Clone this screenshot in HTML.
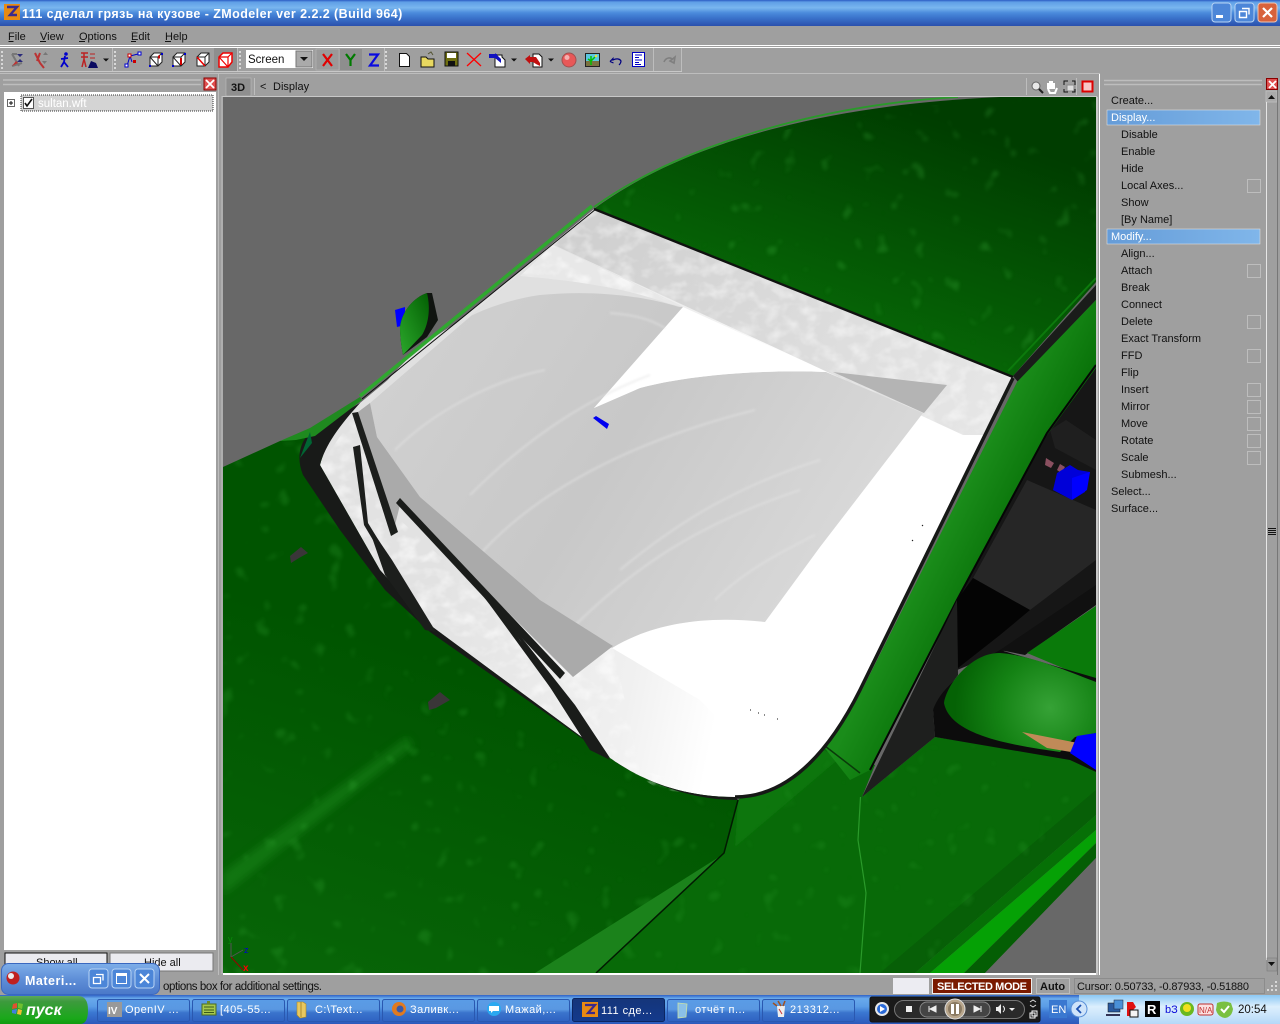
<!DOCTYPE html>
<html><head><meta charset="utf-8"><title>ZModeler</title>
<style>
html,body{margin:0;padding:0;background:#9f9f9f;overflow:hidden}
svg{display:block;position:absolute;left:0;top:0}
text{font-family:"Liberation Sans","Noto Sans CJK SC",sans-serif;font-size:11px;fill:#111}
.w{fill:#fff}
.b{font-weight:bold}
.t{fill:#fff;font-size:11px;letter-spacing:.45px}
</style></head><body>
<svg width="1280" height="1024" viewBox="0 0 1280 1024" xmlns="http://www.w3.org/2000/svg">
<defs>
<linearGradient id="tb" x1="0" y1="0" x2="0" y2="1"><stop offset="0" stop-color="#2c5cc4"/><stop offset=".08" stop-color="#5f9fe6"/><stop offset=".3" stop-color="#79b6ef"/><stop offset=".5" stop-color="#4a8adb"/><stop offset=".7" stop-color="#3a72ca"/><stop offset="1" stop-color="#2a50ac"/></linearGradient>
<linearGradient id="task" x1="0" y1="0" x2="0" y2="1"><stop offset="0" stop-color="#2f62c6"/><stop offset=".12" stop-color="#69aaec"/><stop offset=".4" stop-color="#5a9ce6"/><stop offset=".6" stop-color="#3b78d2"/><stop offset="1" stop-color="#2c59bb"/></linearGradient>
<linearGradient id="btn" x1="0" y1="0" x2="0" y2="1"><stop offset="0" stop-color="#5a9ce6"/><stop offset=".45" stop-color="#5a98e2"/><stop offset=".6" stop-color="#3a74cc"/><stop offset="1" stop-color="#2f62c2"/></linearGradient>
<linearGradient id="tray" x1="0" y1="0" x2="0" y2="1"><stop offset="0" stop-color="#8cc8f4"/><stop offset=".4" stop-color="#dceffd"/><stop offset=".65" stop-color="#cde6fb"/><stop offset="1" stop-color="#b4d8f7"/></linearGradient>
<linearGradient id="act" x1="0" y1="0" x2="0" y2="1"><stop offset="0" stop-color="#15357a"/><stop offset="1" stop-color="#133a8c"/></linearGradient>
<linearGradient id="start" x1="0" y1="0" x2="0" y2="1"><stop offset="0" stop-color="#5ba85b"/><stop offset=".2" stop-color="#3d9a3d"/><stop offset=".8" stop-color="#1aa81a"/><stop offset="1" stop-color="#109a10"/></linearGradient>
<linearGradient id="mat" x1="0" y1="0" x2="0" y2="1"><stop offset="0" stop-color="#7eaee8"/><stop offset=".5" stop-color="#5f8fd8"/><stop offset="1" stop-color="#4a78c8"/></linearGradient>
<linearGradient id="hl" x1="0" y1="0" x2="1" y2="0"><stop offset="0" stop-color="#659cd8"/><stop offset="1" stop-color="#80b6ea"/></linearGradient>
<linearGradient id="roof" gradientUnits="userSpaceOnUse" x1="880" y1="100" x2="800" y2="340"><stop offset="0" stop-color="#003d00"/><stop offset="1" stop-color="#076a07"/></linearGradient>
<linearGradient id="hood" gradientUnits="userSpaceOnUse" x1="400" y1="640" x2="300" y2="960"><stop offset="0" stop-color="#005400"/><stop offset="1" stop-color="#076407"/></linearGradient>
<linearGradient id="pil" gradientUnits="userSpaceOnUse" x1="925" y1="570" x2="985" y2="600"><stop offset="0" stop-color="#1a8c1a"/><stop offset="1" stop-color="#077007"/></linearGradient>
<radialGradient id="mir" gradientUnits="userSpaceOnUse" cx="1050" cy="708" r="95"><stop offset="0" stop-color="#36a236"/><stop offset=".55" stop-color="#148214"/><stop offset="1" stop-color="#056205"/></radialGradient>
<linearGradient id="mirl" x1="0" y1="1" x2="1" y2="0"><stop offset="0" stop-color="#2ba82b"/><stop offset="1" stop-color="#035f03"/></linearGradient>
<linearGradient id="glass" gradientUnits="userSpaceOnUse" x1="400" y1="350" x2="800" y2="600"><stop offset="0" stop-color="#d0d0d0"/><stop offset=".5" stop-color="#c8c8c8"/><stop offset="1" stop-color="#d8d8d8"/></linearGradient>
<linearGradient id="ws" gradientUnits="userSpaceOnUse" x1="420" y1="640" x2="720" y2="700"><stop offset="0" stop-color="#e2e2e2"/><stop offset=".7" stop-color="#f0f0f0"/><stop offset="1" stop-color="#fff"/></linearGradient>
<linearGradient id="fr" gradientUnits="userSpaceOnUse" x1="600" y1="230" x2="1000" y2="390"><stop offset="0" stop-color="#d0d0d0"/><stop offset="1" stop-color="#e6e6e6"/></linearGradient>
<filter id="mot" x="0" y="0" width="100%" height="100%"><feTurbulence type="fractalNoise" baseFrequency=".06 .08" numOctaves="3" seed="4"/><feColorMatrix values="0 0 0 0 1  0 0 0 0 1  0 0 0 0 1  2.6 0 0 0 -1.1"/><feGaussianBlur stdDeviation=".6"/></filter>
<filter id="spk" x="0" y="0" width="100%" height="100%"><feTurbulence type="fractalNoise" baseFrequency=".055" numOctaves="2" seed="9"/><feColorMatrix values="0 0 0 0 .1  0 0 0 0 .72  0 0 0 0 .1  7 0 0 0 -4.6"/><feGaussianBlur stdDeviation="1.500"/></filter>
<filter id="bl"><feGaussianBlur stdDeviation="4"/></filter>
<filter id="bl1"><feGaussianBlur stdDeviation="1"/></filter>
<clipPath id="vp"><rect x="223" y="97" width="873" height="876"/></clipPath>
<clipPath id="frit"><path d="M594 209L1013 378L985 435L963 435L554 245Z"/></clipPath>
<clipPath id="low"><path d="M320 465L355 415L400 520L573 677L613 646L640 770L735 797L660 790L610 758L430 625L380 570Z"/></clipPath>
<clipPath id="top"><path d="M553 245L683 307L670 304C630 290 590 282 520 276Z"/></clipPath>
<clipPath id="hoodc"><path d="M223 467L280 441L310 432L330 470L390 590L430 630L620 763L738 800L724 853L596 973H223Z"/></clipPath>
<clipPath id="roofc"><path d="M597 209C680 150 820 110 1000 100H1096V282L1012 370Z"/></clipPath>
<clipPath id="fendc"><path d="M738 800L830 745L862 797L935 737L1096 772V815L915 973H596L724 853Z"/></clipPath>
<g id="cube"><path d="M3 6L7 2H15V11L11 15H3Z" fill="#fff" stroke="#222"/><path d="M3 6H11V15M11 6L15 2M3 6L11 15" fill="none" stroke="#222"/></g>
</defs>

<!-- window chrome -->
<rect width="1280" height="1024" fill="#9f9f9f"/>
<rect width="1280" height="26" fill="url(#tb)"/>
<rect x="4" y="4" width="16" height="16" fill="#e88a12"/><path d="M7 7H17L10 15H17" fill="none" stroke="#3a2a8c" stroke-width="2.400"/>
<text x="22" y="18" class="w b" style="font-size:12.500px;letter-spacing:.7px" textLength="381" lengthAdjust="spacing">111 сделал грязь на кузове - ZModeler ver 2.2.2 (Build 964)</text>
<rect x="1212" y="3" width="19" height="19" rx="3" fill="#4c86d8" stroke="#b8d4f4"/><rect x="1216" y="15" width="7" height="3" fill="#fff"/>
<rect x="1235" y="3" width="19" height="19" rx="3" fill="#4c86d8" stroke="#b8d4f4"/><path d="M1242 8.500h7v6M1239.500 11.500h7v6h-7z" fill="none" stroke="#fff" stroke-width="1.400"/>
<rect x="1258" y="3" width="19" height="19" rx="3" fill="#d8623c" stroke="#f0c4b0"/><path d="M1263 8l9 9M1272 8l-9 9" stroke="#fff" stroke-width="2.200"/>

<text x="8" y="40">File</text><text x="40" y="40">View</text><text x="79" y="40">Options</text><text x="131" y="40">Edit</text><text x="165" y="40">Help</text>
<path d="M8.500 41.500h5M40 41.500h6M79 41.500h6M131 41.500h5M165 41.500h6" stroke="#111"/>
<rect y="45" width="1280" height="1" fill="#fff"/><rect y="47" width="1280" height="1" fill="#fff"/>
<rect y="71" width="682" height="1" fill="#c8c8c8"/>
<path d="M2 51v2M2 55v2M2 59v2M2 63v2M2 67v2M115 51v2M115 55v2M115 59v2M115 63v2M115 67v2M240 51v2M240 55v2M240 59v2M240 63v2M240 67v2M386 51v2M386 55v2M386 59v2M386 63v2M386 67v2" stroke="#d8d8d8" stroke-width="2"/>
<path d="M112.500 48V71M237.500 48V71M384.500 48V71M653.500 48V71M681.500 48V71" stroke="#bdbdbd"/>

<!-- toolbar icons -->
<path d="M12 54l7 12M12 66l10-3M12 54h5" stroke="#777" stroke-width="2" fill="none"/><path d="M17 54l6 0-3 3zM17 62l6 0-3-3z" fill="#2a2a7a"/><path d="M12 66l6-3-2-2z" fill="#b33"/>
<path d="M35 53l5 10 4 5M40 53l-3 8" stroke="#b33" stroke-width="2" fill="none"/><path d="M43 55l5 0-2.500-3zM42 61h5l-2.500 3z" fill="#777"/>
<circle cx="66" cy="54" r="1.800" fill="#00c"/><path d="M65 56l-1 6-3 5M64 62l4 5M61 59l7-1" stroke="#00c" stroke-width="1.800" fill="none"/>
<path d="M81 53h7M81 57h7M84 53v6l2 8M84 59l-2 8" stroke="#b22" stroke-width="1.500" fill="none"/><path d="M88 68l3-7 5 2 2 5z" fill="#0a0a60"/><path d="M90 54h5M90 58h5" stroke="#b22"/>
<path d="M103 58.500h6l-3 3z" fill="#111"/>
<path d="M127 66l3-10 8-2M132 62l-2-6" stroke="#0000c8" fill="none"/><rect x="128" y="54" width="3" height="3" fill="#fff" stroke="#c00"/><rect x="138" y="52" width="3" height="3" fill="#fff" stroke="#00c"/><rect x="125" y="64" width="3" height="3" fill="#fff" stroke="#00c"/><rect x="133" y="60" width="3" height="3" fill="#c00"/>
<use href="#cube" x="147" y="51"/><path d="M158 57l2 0" stroke="#c00" stroke-width="3"/><rect x="149" y="65" width="2" height="2" fill="#00c"/><rect x="161" y="53" width="2" height="2" fill="#00c"/>
<use href="#cube" x="170" y="51"/><path d="M181 58v7" stroke="#c00" stroke-width="2"/><rect x="172" y="65" width="2" height="2" fill="#00c"/><rect x="184" y="53" width="2" height="2" fill="#00c"/>
<use href="#cube" x="194" y="51"/><path d="M197 57l8 9" stroke="#e00" stroke-width="1.500"/>
<rect x="214" y="48" width="23" height="23" fill="#8e8e8e"/><path d="M219 57L223 53H232V62L228 67H219Z" fill="#fff" stroke="#e00" stroke-width="1.500"/><path d="M219 57H228V67M228 57L232 53M219 57L228 67" fill="none" stroke="#e00" stroke-width="1.200"/>
<rect x="246" y="50" width="67" height="18" fill="#fff"/><rect x="296" y="51" width="16" height="16" fill="#aaa" stroke="#777"/><path d="M300 57h8l-4 4z" fill="#111"/>
<text x="248" y="63" style="font-size:11.500px">Screen</text>
<rect x="316" y="49" width="23" height="21" fill="#9a9a9a" stroke="#bdbdbd" stroke-width=".5"/>
<path d="M323 54l9 12M332 54l-9 12" stroke="#e00000" stroke-width="2.200"/>
<rect x="340" y="49" width="22" height="21" fill="#8e8e8e"/>
<path d="M346 54l4.500 6 4.500-6M350.500 60v6" stroke="#007a00" stroke-width="2.200" fill="none"/>
<path d="M369 54.500h9l-8 11h9" stroke="#0a0ae0" stroke-width="2.200" fill="none"/>
<path d="M399.500 53.500h7l3 3v10h-10z" fill="#fff" stroke="#111"/>
<path d="M421 57h5l2 2h6v8h-13z" fill="#e8d860" stroke="#111"/><path d="M428 54l3-2 2 3" stroke="#553" fill="none"/>
<rect x="445" y="52" width="13" height="14" fill="#6e6e10" stroke="#111"/><rect x="447" y="53" width="9" height="5" fill="#fff"/><rect x="448" y="61" width="7" height="5" fill="#111"/>
<path d="M467 53l14 13M481 53l-14 13" stroke="#f00" stroke-width="1.300"/>
<path d="M495 55h7v2l3 3v7h-10z" fill="#fff" stroke="#111"/><path d="M489 54h6v-1l6 6v4l-6-5v-1h-6z" fill="#1010c0"/><rect x="489" y="54" width="8" height="4" fill="#1010c0"/>
<path d="M511 58.500h6l-3 3z" fill="#111"/><path d="M548 58.500h6l-3 3z" fill="#111"/>
<path d="M533 54h6l3 3v10h-9z" fill="#fff" stroke="#111"/><path d="M525 59l5-4v2h6l4 6v3l-4-2-3-2h-3v2z" fill="#c01010"/>
<circle cx="569" cy="60" r="7" fill="#e85858"/><circle cx="567" cy="57.500" r="2.500" fill="#f4b0b0"/><circle cx="569" cy="60" r="7" fill="none" stroke="#a05050"/>
<rect x="585.500" y="53.500" width="14" height="13" fill="#5ac8e0" stroke="#222"/><rect x="586" y="61" width="13" height="5" fill="#7a7240"/><path d="M591 65v-9M588 59l3 2 4-4" stroke="#00c000" stroke-width="1.500" fill="none"/><circle cx="596" cy="56" r="1.300" fill="#e8e040"/>
<path d="M610 61.500l3-3v1.500c4-2 7-1 8 1 0 2-1 3-2 4M610 61.500l3.500 1.500" fill="none" stroke="#000080" stroke-width="1.200"/>
<rect x="632.500" y="52.500" width="12" height="14" fill="#fff" stroke="#0000c0"/><path d="M635 55h7M635 57.500h4M635 60h7M635 62.500h4M635 64.500h6" stroke="#0000c8"/>
<path d="M664 62c2-5 7-5 9-2M675 57l-1 6-4-2z" fill="none" stroke="#7f7f7f" stroke-width="1.600"/>

<!-- left panel -->
<rect y="73" width="1100" height="1" fill="#bdbdbd"/>
<path d="M3 80H201M3 84.500H201" stroke="#bdbdbd" stroke-width="1.400"/>
<rect x="204" y="78" width="12" height="12" fill="#e05050" stroke="#800"/><path d="M206 80l8 8M214 80l-8 8" stroke="#fff" stroke-width="1.800"/>
<rect x="4" y="92" width="212" height="858" fill="#fff"/>
<path d="M218.500 73V975" stroke="#bdbdbd"/>
<rect x="7.500" y="99.500" width="7" height="7" fill="#fff" stroke="#666"/><path d="M9 103h4M11 101v4" stroke="#111"/>
<rect x="21" y="95" width="192" height="16" fill="#d4d4d4" stroke="#333" stroke-dasharray="1 1"/>
<rect x="23.500" y="97.500" width="10" height="11" fill="#fff" stroke="#555"/><path d="M25 103l2 3 5-7" fill="none" stroke="#111" stroke-width="1.600"/>
<text x="38" y="107" style="fill:#fff;font-size:11.500px">sultan.wft</text>
<rect x="5" y="953" width="102" height="19" fill="#ebebf0" stroke="#111"/><text x="36" y="966">Show all</text>
<rect x="110" y="953" width="103" height="18" fill="#ebebf0" stroke="#777"/><text x="144" y="966">Hide all</text>

<!-- viewport header -->
<rect x="226" y="78" width="25" height="18" fill="#8f8f8f" stroke="#bdbdbd" stroke-width=".6"/>
<text x="231" y="91" class="b">3D</text>
<text x="260" y="90">&lt;</text><text x="273" y="90">Display</text>
<path d="M254.500 78V95M1026.500 78V95M1076.500 78V95" stroke="#bdbdbd"/>
<circle cx="1036" cy="86" r="4" fill="#e8e8e8" stroke="#666"/><path d="M1039 89l4 4" stroke="#222" stroke-width="2"/>
<path d="M1048 89l0-6m2 6v-8m2 8v-8m2 8v-6m-6 6l2 4h5l2-5" stroke="#fff" stroke-width="2" fill="none"/>
<path d="M1064 85v-4h4M1072 81h3v4M1075 89v3h-3M1068 92h-4v-3" stroke="#111" fill="none"/><rect x="1067" y="85" width="7" height="6" fill="#ddd" stroke="#888"/>
<rect x="1082.500" y="81.500" width="10" height="10" fill="#f8c8c8" stroke="#d00" stroke-width="2"/>
<rect x="222" y="96" width="875" height="1" fill="#c8c8c8"/>

<!-- viewport -->
<rect x="223" y="97" width="873" height="876" fill="#686868"/>
<g clip-path="url(#vp)">
<!-- hood -->
<path d="M223 467L280 441L310 432L330 470L390 590L430 630L620 763L738 800L724 853L596 973H223Z" fill="url(#hood)"/>
<g clip-path="url(#hoodc)"><path d="M223 873L407 737L414 745L223 895Z" fill="#1d8a1d" opacity=".5" filter="url(#bl)"/></g>
<rect x="223" y="440" width="515" height="535" filter="url(#spk)" opacity=".14" clip-path="url(#hoodc)"/>
<!-- fender -->
<path d="M738 800L815 740L875 765L862 797L935 737L1070 758L1096 772V815L915 973H596L724 853Z" fill="#086a08"/>
<g clip-path="url(#fendc)">
<path d="M738 800L818 748L841 757L735 847Z" fill="#0c760c" filter="url(#bl1)"/>
<path d="M880 973L1096 790V815L915 973Z" fill="#075f07"/>
<rect x="596" y="740" width="500" height="235" filter="url(#spk)" opacity=".1"/>
</g>
<path d="M535 973L719 857L724 853L596 973Z" fill="#1b821b"/>
<path d="M1096 815V830L930 973H915Z" fill="#067006"/>
<path d="M1096 830V843L964 973H930Z" fill="#05a105"/>
<path d="M1096 843V858L985 973H964Z" fill="#045e04"/>
<path d="M1096 858L985 973H1096Z" fill="#686868"/>
<path d="M738 800L724 853L596 973" fill="none" stroke="#021a02" stroke-width="1.500"/>
<path d="M860.500 797L858 840L866 893L860 973" fill="none" stroke="#2a9a2a" stroke-width="1.200"/>
<!-- roof -->
<path d="M594 209C680 145 820 105 1000 97H1096V282L1013 376Z" fill="url(#roof)"/>
<rect x="600" y="100" width="496" height="270" filter="url(#spk)" opacity=".18" clip-path="url(#roofc)"/>
<path d="M594 207C680 145 820 105 958 97" fill="none" stroke="#2a9a2a" stroke-width="1.800"/>
<path d="M1008 371L1096 278" stroke="#0c7a0c" stroke-width="2"/>
<!-- interior -->
<path d="M1096 355L1030 430L945 600V675L1030 640L1096 600Z" fill="#161616"/>
<path d="M1027 480L1096 510V560L1030 610L973 578Z" fill="#262626"/>
<path d="M957 600L973 578L1030 610L1000 635L958 668Z" fill="#040404"/>
<path d="M1050 430L1066 420L1096 440V470L1055 448Z" fill="#1f1f1f"/>
<path d="M1000 650L1096 585V605L1025 655Z" fill="#101010"/>
<path d="M1027 653L1096 606V682Z" fill="#0a7a0a"/>
<path d="M1046 458l8 5-3 5-6-3z" fill="#8a5060"/><path d="M1060 464l5 3-4 6-4-3z" fill="#8a5060"/>
<path d="M1057 473L1070 465L1078 470L1090 472L1085 492L1072 500L1053 490Z" fill="#0000d8"/><path d="M1072 478L1090 472L1087 490L1072 500Z" fill="#0000ff"/>
<!-- a pillar -->
<path d="M1013 376L1096 285V300L1018 382Z" fill="#1a1c1a"/>
<path d="M1017 382L1096 300V368L1047 435L957 600L870 770L850 780L820 742L862 690Z" fill="url(#pil)"/>
<path d="M1096 365L1047 433L957 600L870 770" fill="none" stroke="#050505" stroke-width="2"/>
<path d="M825 746L860 773" stroke="#0a3a0a" stroke-width="1.500"/>
<!-- mirror base -->
<path d="M957 600L862 797L935 737L933 710L958 675Z" fill="#1e1f1e"/>
<path d="M933 710C940 690 960 672 1000 650L1096 678V772L1070 760L935 737Z" fill="#0c0c0c"/>
<path d="M944 703C948 680 975 652 1000 653C1030 655 1070 672 1096 682V733L1075 737L1060 752C1010 745 950 735 944 703Z" fill="url(#mir)"/>
<path d="M1022 732L1078 743L1077 753L1047 748Z" fill="#c08a58"/>
<path d="M1077 736L1096 733V770L1070 753Z" fill="#0000ff"/>
<!-- windshield -->
<path d="M594 209L1013 378L860 690C830 750 790 797 735 797C670 797 630 772 610 758L430 625L380 570L320 465C325 445 340 425 360 403Z" fill="url(#ws)"/>
<rect x="315" y="405" width="440" height="400" filter="url(#mot)" opacity=".55" clip-path="url(#low)"/>
<path d="M923 413L963 435L1013 378L860 690C840 730 815 770 780 785L700 700L612 648C650 625 700 615 765 622Z" fill="#fff"/>
<path d="M594 209L1013 378L985 435L963 435L554 245Z" fill="url(#fr)"/>
<rect x="540" y="205" width="480" height="235" filter="url(#mot)" opacity=".45" clip-path="url(#frit)"/>
<!-- inner glass -->
<path d="M370 403L553 245L683 307L594 408L640 388C700 372 780 370 826 372L923 413L820 547L765 622C700 615 650 625 612 648L540 600L420 497L377 437Z" fill="url(#glass)"/>
<path d="M370 403L553 245L683 307L679 307C640 295 590 290 540 295C470 305 410 345 370 403Z" fill="#e0e0e0"/>
<path d="M553 245L683 307L670 304C630 290 590 282 520 276Z" fill="#e8e8e8"/>
<rect x="515" y="240" width="175" height="70" filter="url(#mot)" opacity=".6" clip-path="url(#top)"/>
<path d="M833 372L947 385L924 413Z" fill="#b4b4b4"/>
<path d="M683 307L826 372C780 370 700 372 640 388L594 408Z" fill="#fff"/>
<path d="M610 313c25 2 40 6 55 15M395 450c40-40 100-70 150-80M470 495c40-40 100-90 180-120M475 560c60-70 160-120 280-150M560 640c60-60 120-110 240-150M620 570c60-50 120-85 200-110M715 600c30-30 70-50 100-65" fill="none" stroke="#e4e4e4" stroke-width="2" opacity=".55" filter="url(#bl1)"/>
<!-- shadow band -->
<path d="M358 412L370 403L377 437L420 497L540 600L613 646L573 677L400 505L395 525L372 455Z" fill="#aaaaaa"/>
<!-- black trim -->
<path d="M594 209L1013 377" stroke="#101210" stroke-width="2.400"/>
<path d="M1013 378L860 690C830 750 790 797 735 797" fill="none" stroke="#161816" stroke-width="3.500"/>
<path d="M310 432C298 445 297 460 303 475L340 530L385 590L430 632L620 765C670 795 710 800 738 800L735 797C670 797 630 772 610 758L430 625L380 570L320 465C325 445 340 425 360 403Z" fill="#181a18"/>
<path d="M280 441L310 428L360 397L362 400L315 436L296 440Z" fill="#1f8a1f"/>
<path d="M360 396L592 206" stroke="#2fa82f" stroke-width="3.500"/>
<path d="M362 399L596 209" stroke="#0c0c0c" stroke-width="1"/>
<path d="M310 432L312 443L300 458Z" fill="#063"/>
<!-- wipers -->
<path d="M352 413L358 412L398 532L391 536Z" fill="#1c1e1c"/>
<path d="M353 447L360 445L368 523L420 608L416 612L364 525Z" fill="#1c1e1c"/>
<path d="M367 523L385 575L425 630L436 632L392 560Z" fill="#1c1e1c"/>
<path d="M396 503L400 498L565 673L560 679Z" fill="#1a1c1a"/>
<path d="M453 557L490 600L610 760L590 750L563 705L490 605Z" fill="#1a1c1a"/>
<path d="M490 605L520 640L590 750L610 758L575 705L500 610Z" fill="#1a1c1a"/>
<!-- left mirror -->
<path d="M395 310l10-3 0 18-8 2z" fill="#0000ff"/>
<path d="M400 327C402 310 415 297 427 293H432L438 320L427 337L403 355C401 345 400 335 400 327Z" fill="#101410"/>
<path d="M400 327C402 310 415 297 427 293C431 310 428 325 422 335L403 355C401 345 400 335 400 327Z" fill="url(#mirl)"/>
<path d="M593 418l3-2 13 8-2 5z" fill="#0000f0"/>
<path d="M290 556l11-9 7 6-9 5-8 5z" fill="#3a3638"/><path d="M428 702l12-10 10 8-14 8-7 2z" fill="#3a3638"/>
<path d="M231 957l12-7M231 957v-14" fill="none" stroke="#555"/><path d="M231 957l12 13" stroke="#900"/>
<text x="228" y="942" style="font-size:9px;fill:#0a8a0a">y</text><text x="244" y="953" style="font-size:9px;fill:#0000d0">z</text><text x="243" y="971" class="b" style="font-size:10px;fill:#f00">x</text>
<path d="M750 710l1 0M758 713l1 0M764 715l1 0M777 719l1 0M922 525l1 1M912 540l1 1" stroke="#111"/>
</g>
<rect x="221.500" y="96" width="1" height="878" fill="#bdbdbd"/>
<rect x="223" y="973" width="875" height="2" fill="#fff"/>
<rect x="1096" y="97" width="2" height="878" fill="#c9c9c9"/>

<!-- right panel -->
<path d="M1099.500 74V975" stroke="#fff"/>
<path d="M1104 80.500H1262M1104 84.500H1262" stroke="#bdbdbd" stroke-width="1.400"/>
<rect x="1266.500" y="78.500" width="11" height="11" fill="#e05050" stroke="#800"/><path d="M1269 81l7 7M1276 81l-7 7" stroke="#fff" stroke-width="1.800"/>
<rect x="1266" y="91" width="11" height="11" fill="#aaa" stroke="#bbb"/><path d="M1268 99h7l-3.500-4z" fill="#111"/>
<path d="M1266.500 102V960" stroke="#e6e6e6"/><path d="M1277.500 90V975" stroke="#777"/>
<rect x="1267" y="958" width="10" height="13" fill="#9a9a9a" stroke="#777" stroke-width=".5"/><path d="M1268 962h7l-3.500 4z" fill="#111"/>
<path d="M1268 528.500h8M1268 530.500h8M1268 532.500h8M1268 534.500h8" stroke="#111"/>
<rect x="1107" y="110" width="153" height="15" fill="url(#hl)" stroke="#ddd" stroke-width=".6"/>
<rect x="1107" y="229" width="153" height="15" fill="url(#hl)" stroke="#ddd" stroke-width=".6"/>
<g style="font-size:11px">
<text x="1111" y="104">Create...</text>
<text x="1111" y="121" style="fill:#fff">Display...</text>
<text x="1121" y="138">Disable</text><text x="1121" y="155">Enable</text><text x="1121" y="172">Hide</text><text x="1121" y="189">Local Axes...</text><text x="1121" y="206">Show</text><text x="1121" y="223">[By Name]</text>
<text x="1111" y="240" style="fill:#fff">Modify...</text>
<text x="1121" y="257">Align...</text><text x="1121" y="274">Attach</text><text x="1121" y="291">Break</text><text x="1121" y="308">Connect</text><text x="1121" y="325">Delete</text><text x="1121" y="342">Exact Transform</text><text x="1121" y="359">FFD</text><text x="1121" y="376">Flip</text><text x="1121" y="393">Insert</text><text x="1121" y="410">Mirror</text><text x="1121" y="427">Move</text><text x="1121" y="444">Rotate</text><text x="1121" y="461">Scale</text><text x="1121" y="478">Submesh...</text>
<text x="1111" y="495">Select...</text><text x="1111" y="512">Surface...</text>
</g>
<g fill="none" stroke="#bdbdbd"><rect x="1247.500" y="179.500" width="13" height="13"/><rect x="1247.500" y="264.500" width="13" height="13"/><rect x="1247.500" y="315.500" width="13" height="13"/><rect x="1247.500" y="349.500" width="13" height="13"/><rect x="1247.500" y="383.500" width="13" height="13"/><rect x="1247.500" y="400.500" width="13" height="13"/><rect x="1247.500" y="417.500" width="13" height="13"/><rect x="1247.500" y="434.500" width="13" height="13"/><rect x="1247.500" y="451.500" width="13" height="13"/></g>

<!-- status bar -->
<rect y="975" width="1280" height="20" fill="#9f9f9f"/>
<text x="163" y="990" style="font-size:11.500px" textLength="159">options box for additional settings.</text>
<rect x="893" y="978" width="36" height="16" fill="#ececf2"/>
<rect x="932.500" y="978.500" width="99" height="15" fill="#7a1a00" stroke="#eee"/>
<text x="937" y="990" class="b" style="fill:#fff;font-size:11px" textLength="90">SELECTED MODE</text>
<rect x="1036.500" y="978.500" width="33" height="15" fill="none" stroke="#bdbdbd"/><text x="1040" y="990" class="b">Auto</text>
<rect x="1074.500" y="978.500" width="190" height="15" fill="none" stroke="#8c8c8c"/><text x="1077" y="990" textLength="172">Cursor: 0.50733, -0.87933, -0.51880</text>
<path d="M1275 982h2M1271 986h2M1275 986h2M1267 990h2M1271 990h2M1275 990h2" stroke="#d8d8d8" stroke-width="2"/>

<!-- taskbar -->
<rect y="995" width="1280" height="29" fill="url(#task)"/>
<rect x="1079" y="995" width="201" height="29" fill="url(#tray)"/>
<path d="M0 996H78Q88 996 88 1010Q88 1024 80 1024H0Z" fill="url(#start)"/>
<path d="M18 1009l4 1-1 5-4-1z" fill="#f0c030"/><path d="M13 1004l4-1 0 5-5 1z" fill="#e05030"/><path d="M18 1003l5 1-1 5-4-1z" fill="#70c030"/><path d="M12 1010l5-1-1 5-4-1z" fill="#4080e0"/>
<text x="26" y="1015" class="b" style="fill:#fff;font-size:16px;font-style:italic">пуск</text>

<g stroke="#2a58b0">
<rect x="97.500" y="999.500" width="92" height="22" rx="2" fill="url(#btn)"/><rect x="192.500" y="999.500" width="92" height="22" rx="2" fill="url(#btn)"/><rect x="287.500" y="999.500" width="92" height="22" rx="2" fill="url(#btn)"/><rect x="382.500" y="999.500" width="92" height="22" rx="2" fill="url(#btn)"/><rect x="477.500" y="999.500" width="92" height="22" rx="2" fill="url(#btn)"/><rect x="572.500" y="998.500" width="92" height="23" rx="2" fill="url(#act)" stroke="#0c2560"/><rect x="667.500" y="999.500" width="92" height="22" rx="2" fill="url(#btn)"/><rect x="762.500" y="999.500" width="92" height="22" rx="2" fill="url(#btn)"/>
</g>
<text x="125" y="1013" class="t">OpenIV ...</text>
<text x="220" y="1013" class="t">[405-55...</text>
<text x="315" y="1013" class="t">C:\Text...</text>
<text x="410" y="1013" class="t">Заливк...</text>
<text x="505" y="1013" class="t">Мажай,...</text>
<text x="601" y="1014" class="t">111 сде...</text>
<text x="695" y="1013" class="t">отчёт п...</text>
<text x="790" y="1013" class="t">213312...</text>
<rect x="107" y="1002" width="15" height="15" fill="#999"/><text x="108" y="1014" class="b" style="font-size:10px;fill:#fff">IV</text>
<rect x="202" y="1004" width="14" height="11" fill="#a6c84c" stroke="#4a6a20"/><path d="M204 1007h10M204 1010h10M204 1012.500h10" stroke="#3a5a1a"/><rect x="207" y="1001" width="3" height="3" fill="#6a8a2a"/>
<path d="M297 1002h6l3 2v13l-6 1-3-3z" fill="#e8c860" stroke="#b08a20" stroke-width=".6"/><path d="M301 1002v15" stroke="#aa8a30"/>
<circle cx="399" cy="1009" r="7" fill="#e07a20"/><circle cx="400" cy="1009" r="3.500" fill="#3a5aa8"/>
<circle cx="494" cy="1009" r="7" fill="#2aa8f0"/><path d="M489 1006h10v5h-6l-2 2v-2h-2z" fill="#fff"/>
<rect x="582" y="1002" width="16" height="15" fill="#e88a12"/><path d="M585 1005h10l-7 8h7" fill="none" stroke="#3a2a8c" stroke-width="2.200"/>
<path d="M678 1003l9 1-1 13-8 1z" fill="#8ac0e8" stroke="#c8e0a8" stroke-width=".8"/>
<path d="M777 1006h8l-1 11h-6z" fill="#eee"/><path d="M778 1001l3 5M785 1001l-2 5M773 1003l4 3" stroke="#a05020" stroke-width="1.500"/><path d="M779 1009l3 5" stroke="#c33"/>

<!-- media player -->
<rect x="870" y="997" width="170" height="25" rx="2" fill="#1a1a1a" stroke="#111"/>
<circle cx="882" cy="1009" r="7" fill="#e8e8e8"/><circle cx="882" cy="1009" r="5" fill="#2a6ad8"/><path d="M880 1006l5 3-5 3z" fill="#fff"/>
<rect x="894.500" y="1000.500" width="130" height="18" rx="9" fill="#2a2a2a" stroke="#777"/>
<rect x="906" y="1006" width="6" height="6" fill="#eee"/>
<rect x="920" y="1002" width="70" height="15" rx="7" fill="#444" stroke="#888"/>
<path d="M929 1006v6M936 1006l-6 3 6 3z" fill="#eee" stroke="#eee"/><path d="M974 1006l6 3-6 3zM981 1006v6" fill="#eee" stroke="#eee"/>
<circle cx="955" cy="1009" r="10" fill="#b8a68c" stroke="#ddd"/><circle cx="955" cy="1009" r="7" fill="#8a7a62"/><rect x="951" y="1004" width="3" height="10" fill="#fff"/><rect x="956" y="1004" width="3" height="10" fill="#fff"/>
<path d="M996 1007h2l3-3v10l-3-3h-2z" fill="#eee"/><path d="M1003 1006c2 2 2 4 0 6" stroke="#eee" fill="none"/><path d="M1009 1008h6l-3 3z" fill="#eee"/>
<path d="M1030 1002l3-2 3 2M1030 1005l3 2 3-2" stroke="#ddd" fill="none"/><rect x="1030" y="1013" width="5" height="5" fill="none" stroke="#fff"/><rect x="1032" y="1011" width="5" height="5" fill="none" stroke="#fff"/>

<rect x="1049" y="1000" width="18" height="18" fill="#3a78d0"/><text x="1051" y="1013" style="fill:#fff;font-size:11px">EN</text>
<circle cx="1079" cy="1009" r="8" fill="#cfe4fa" stroke="#5a90d8"/><path d="M1081 1005l-4 4 4 4" stroke="#1a50b0" stroke-width="1.800" fill="none"/>
<rect x="1108" y="1003" width="12" height="9" fill="#2a5aa0" stroke="#111" stroke-width=".5"/><rect x="1114" y="1000" width="9" height="9" fill="#4a90d8" stroke="#223" stroke-width=".5"/><rect x="1106" y="1014" width="14" height="2" fill="#335"/>
<path d="M1127 1002h6l3 5-3 3 3 6h-9z" fill="#e01010"/><path d="M1130 1010h8v7h-8z" fill="#f4f4f4" stroke="#111"/>
<rect x="1145" y="1001" width="15" height="16" fill="#000"/><text x="1147" y="1014" class="b" style="fill:#fff;font-size:13px">R</text>
<text x="1165" y="1013" style="fill:#0a0ad8;font-size:11px">bЗ</text>
<circle cx="1187" cy="1009" r="7" fill="#6ab820"/><circle cx="1187" cy="1008" r="4" fill="#f0e020"/>
<rect x="1198" y="1004" width="15" height="11" rx="2" fill="#fce0e0" stroke="#c03030"/><text x="1199" y="1013" style="font-size:8px;fill:#c03030">N/A</text>
<path d="M1217 1003q7-3 14 0l2 6q-1 8-8 9-7-1-9-8z" fill="#7ac040"/><path d="M1221 1009l3 3 5-6" stroke="#fff" stroke-width="2" fill="none"/>
<text x="1238" y="1013" style="font-size:11.500px;fill:#111">20:54</text>

<!-- floating Materials window -->
<rect x="1.500" y="963.500" width="158" height="31" rx="7" fill="url(#mat)" stroke="#3a68c0"/>
<circle cx="13" cy="978" r="6.500" fill="#c02020"/><circle cx="11" cy="976" r="3" fill="#eee"/>
<text x="25" y="985" class="b" style="fill:#fff;font-size:12.500px;letter-spacing:.5px">Materi...</text>
<g fill="#4c86d8" stroke="#b8d4f4"><rect x="89" y="969" width="19" height="19" rx="3"/><rect x="112" y="969" width="19" height="19" rx="3"/><rect x="135" y="969" width="19" height="19" rx="3"/></g>
<path d="M96 974.500h7v6M93.500 977.500h7v6h-7z" fill="none" stroke="#fff" stroke-width="1.300"/>
<rect x="116.500" y="973.500" width="10" height="10" fill="none" stroke="#fff"/><path d="M116.500 975h10" stroke="#fff" stroke-width="2"/>
<path d="M140 974l9 9M149 974l-9 9" stroke="#fff" stroke-width="2"/>
</svg>
</body></html>
